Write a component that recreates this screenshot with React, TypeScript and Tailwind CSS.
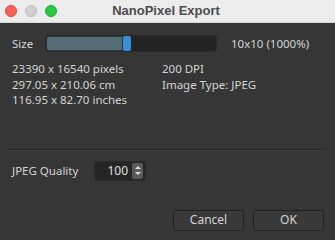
import React from 'react';

const App: React.FC = () => {
  return (
    <div className="w-[335px] h-[240px] flex flex-col bg-[#363636] text-[#d4d4d4] text-[11.5px] overflow-hidden" style={{ fontFamily: '"Noto Sans", "Open Sans", sans-serif' }}>
      {/* title bar */}
      <div className="h-[23px] flex items-center bg-[#ececec] border-b border-[#d6d6d6] relative">
        <div className="flex gap-[8px] pl-[5px]">
          <span className="w-[12px] h-[12px] rounded-full bg-[#fe5f57] border border-[#e0443e]"></span>
          <span className="w-[12px] h-[12px] rounded-full bg-[#d0d0d0] border border-[#bdbdbd]"></span>
          <span className="w-[12px] h-[12px] rounded-full bg-[#28c840] border border-[#1aab29]"></span>
        </div>
        <div className="flex-1 text-center pr-[60px] font-bold text-[13px] text-[#4c4c4c]" style={{ fontFamily: '"Liberation Sans", sans-serif' }}>NanoPixel Export</div>
      </div>

      <div className="flex-1 flex flex-col px-[12px] pt-[12px]">
        <div className="flex items-center h-[17px]">
          <span className="w-[33px]">Size</span>
          <div className="w-[172px] h-[17px] rounded-[3px] bg-[#232323] border border-[#2a2a2a] flex overflow-hidden">
            <div className="w-[77px] bg-[#546a74] border border-[#2b3a40] rounded-l-[3px]"></div>
            <div className="w-[8px] bg-[#3a8fd9] rounded-[2px]"></div>
          </div>
          <span className="ml-[14px]">10x10 (1000%)</span>
        </div>

        <div className="grid grid-cols-[150px_1fr] mt-[9px] leading-[15.5px]">
          <div className="flex flex-col">
            <span>23390 x 16540 pixels</span>
            <span>297.05 x 210.06 cm</span>
            <span>116.95 x 82.70 inches</span>
          </div>
          <div className="flex flex-col">
            <span>200 DPI</span>
            <span>Image Type: JPEG</span>
          </div>
        </div>

        <div className="mt-[41px] -mx-[4px] h-[2px] bg-[#272727] border-b border-[#3e3e3e]"></div>

        <div className="flex items-center mt-[10px]">
          <span className="w-[82px]">JPEG Quality</span>
          <div className="w-[52px] h-[20px] rounded-[3px] bg-[#252525] border border-[#2c2c2c] flex items-center">
            <span className="flex-1 text-right pr-[4px] text-[#e0e0e0] text-[12px]">100</span>
            <div className="w-[11px] h-[16px] mr-[2px] rounded-[2px] bg-[#5a5a5a] flex flex-col items-center justify-center gap-[3px]">
              <svg width="6" height="3" viewBox="0 0 6 3"><path d="M0 3 L3 0 L6 3 Z" fill="#dcdcdc" /></svg>
              <svg width="6" height="3" viewBox="0 0 6 3"><path d="M0 0 L3 3 L6 0 Z" fill="#dcdcdc" /></svg>
            </div>
          </div>
        </div>

        <div className="flex justify-end gap-[9px] mt-[29px] -mr-[1px]">
          <button className="w-[71px] h-[21px] rounded-[3px] border border-[#222] bg-[#393939] text-[#d4d4d4] text-[12px]">Cancel</button>
          <button className="w-[71px] h-[21px] rounded-[3px] border border-[#222] bg-[#393939] text-[#d4d4d4] text-[12px]">OK</button>
        </div>
      </div>
    </div>
  );
};

export default App;
